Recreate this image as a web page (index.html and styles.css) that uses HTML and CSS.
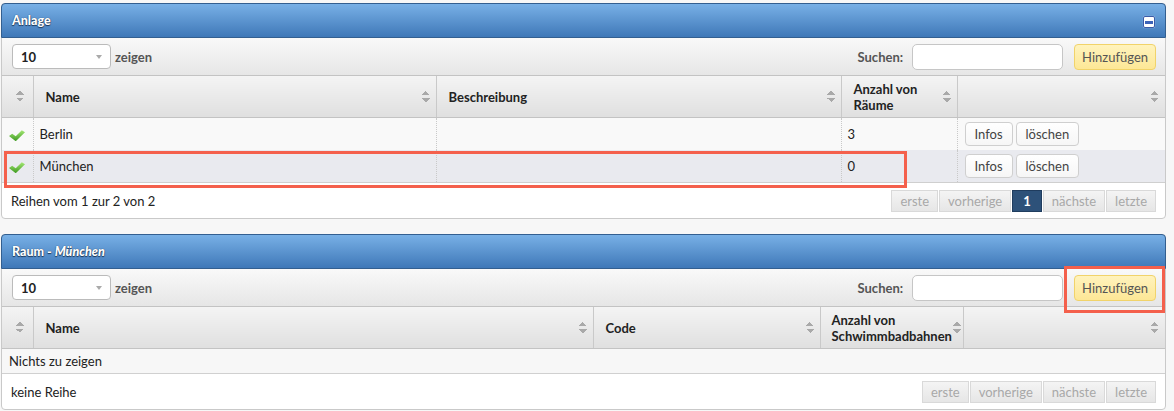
FILE: index.html
```html
<!DOCTYPE html>
<html lang="de">
<head>
  <meta charset="UTF-8">
  <title>Anlage</title>
  <link rel="stylesheet" href="styles.css">
</head>
<body>

<!-- Anlage -->
<div class="panel">
  <div class="panel-head">
    <span class="panel-title">Anlage</span>
    <span class="collapse"><span></span></span>
  </div>
  <div class="toolbar">
    <div class="length">
      <span class="select">10<span class="caret"></span></span>
      <span class="lbl">zeigen</span>
    </div>
    <div class="search">
      <span class="lbl">Suchen:</span>
      <span class="input"></span>
      <button class="add">Hinzufügen</button>
    </div>
  </div>
  <table class="grid">
    <colgroup>
      <col style="width:31px">
      <col style="width:403px">
      <col style="width:405px">
      <col style="width:116px">
      <col>
    </colgroup>
    <thead>
      <tr>
        <th class="first"><span class="sort"></span></th>
        <th><div class="th-in"><span>Name</span><span class="sort"></span></div></th>
        <th><div class="th-in"><span>Beschreibung</span><span class="sort"></span></div></th>
        <th><div class="th-in"><span>Anzahl von<br>Räume</span><span class="sort"></span></div></th>
        <th><div class="th-in"><span></span><span class="sort"></span></div></th>
      </tr>
    </thead>
    <tbody>
      <tr>
        <td class="first"><span class="check"></span></td>
        <td>Berlin</td>
        <td></td>
        <td>3</td>
        <td class="actions"><button class="btn">Infos</button><button class="btn">löschen</button></td>
      </tr>
      <tr class="selected">
        <td class="first"><span class="check"></span></td>
        <td>München</td>
        <td></td>
        <td>0</td>
        <td class="actions"><button class="btn">Infos</button><button class="btn">löschen</button></td>
      </tr>
    </tbody>
  </table>
  <div class="foot">
    <span>Reihen vom 1 zur 2 von 2</span>
    <div class="pager">
      <span>erste</span><span>vorherige</span><span class="current">1</span><span>nächste</span><span>letzte</span>
    </div>
  </div>
  <div class="mark mark-row"></div>
</div>

<!-- Raum -->
<div class="panel">
  <div class="panel-head">
    <span class="panel-title">Raum - <em>München</em></span>
  </div>
  <div class="toolbar">
    <div class="length">
      <span class="select">10<span class="caret"></span></span>
      <span class="lbl">zeigen</span>
    </div>
    <div class="search">
      <span class="lbl">Suchen:</span>
      <span class="input"></span>
      <button class="add">Hinzufügen</button>
    </div>
  </div>
  <table class="grid">
    <colgroup>
      <col style="width:31px">
      <col style="width:560px">
      <col style="width:227px">
      <col style="width:143px">
      <col>
    </colgroup>
    <thead>
      <tr>
        <th class="first"><span class="sort"></span></th>
        <th><div class="th-in"><span>Name</span><span class="sort"></span></div></th>
        <th><div class="th-in"><span>Code</span><span class="sort"></span></div></th>
        <th class="tight"><div class="th-in"><span>Anzahl von<br>Schwimmbadbahnen</span><span class="sort"></span></div></th>
        <th><div class="th-in"><span></span><span class="sort"></span></div></th>
      </tr>
    </thead>
    <tbody>
      <tr class="empty">
        <td colspan="5">Nichts zu zeigen</td>
      </tr>
    </tbody>
  </table>
  <div class="foot">
    <span>keine Reihe</span>
    <div class="pager">
      <span>erste</span><span>vorherige</span><span>nächste</span><span>letzte</span>
    </div>
  </div>
  <div class="mark mark-add"></div>
</div>

</body>
</html>
```

FILE: styles.css
```css
body {
  margin: 0;
  padding: 3px 8px 0 1px;
  font-family: Lato, "Open Sans", sans-serif;
  font-size: 13px;
  color: #222;
  background: #f7f7f7;
}
.panel {
  position: relative;
  background: #fff;
  border: 1px solid #c9c9c9;
  border-radius: 4px;
  margin-bottom: 15px;
}
.panel-head {
  display: flex;
  justify-content: space-between;
  align-items: center;
  height: 33px;
  margin: -1px -1px 0;
  padding: 0 10px;
  background: linear-gradient(#78b0e6, #3f78b8);
  border: 1px solid #335f90;
  border-radius: 4px 4px 0 0;
}
.panel-title {
  color: #fff;
  font-weight: 900;
  font-size: 12.5px;
  text-shadow: 0 1px 1px #1a3556, 0 0 1px #1a3556;
}
.panel-title em {
  font-style: italic;
}
.collapse {
  display: flex;
  align-items: center;
  justify-content: center;
  width: 10px;
  height: 10px;
  margin-top: 3px;
  background: #fff;
  border: 1px solid #3b5ca8;
  border-radius: 2px;
  box-shadow: 0 0 1px #c8d8f0;
}
.collapse span {
  width: 8px;
  height: 3px;
  background: #3d63b8;
}
.toolbar {
  display: flex;
  justify-content: space-between;
  align-items: center;
  height: 37px;
  padding: 0 9px 0 10px;
  background: linear-gradient(#f9f9f9, #e6e6e6);
  border-bottom: 1px solid #c3c3c3;
}
.length, .search {
  display: flex;
  align-items: center;
}
.lbl {
  font-weight: bold;
  color: #555;
}
.select {
  position: relative;
  display: flex;
  align-items: center;
  box-sizing: border-box;
  width: 99px;
  height: 25px;
  margin-right: 4px;
  padding-left: 8px;
  font-weight: bold;
  background: #fff;
  border: 1px solid #bbb;
  border-radius: 4px;
}
.caret {
  position: absolute;
  right: 8px;
  top: 10px;
  border-left: 3px solid transparent;
  border-right: 3px solid transparent;
  border-top: 4px solid #aaa;
}
.search .lbl {
  margin-right: 9px;
}
.input {
  box-sizing: border-box;
  width: 151px;
  height: 26px;
  background: #fff;
  border: 1px solid #c6c6c6;
  border-radius: 5px;
}
.add {
  margin-left: 11px;
  height: 26px;
  padding: 0 7px;
  font-family: inherit;
  font-size: 13px;
  color: #555;
  background: linear-gradient(#fff3bd, #fde796);
  border: 1px solid #f1d36a;
  border-radius: 4px;
}
.grid {
  width: 100%;
  border-collapse: collapse;
  table-layout: fixed;
}
.grid th {
  height: 41px;
  padding: 0 6px 0 12px;
  text-align: left;
  font-weight: bold;
  line-height: 16px;
  background: linear-gradient(#f4f4f4, #dfdfdf);
  border-right: 1px solid #c9c9c9;
  border-bottom: 1px solid #c3c3c3;
}
.grid th:last-child {
  border-right: none;
}
.grid th.first {
  padding: 0;
  text-align: center;
}
.grid th.tight {
  padding-left: 11px;
  padding-right: 2px;
}
.th-in {
  display: flex;
  justify-content: space-between;
  align-items: center;
}
.sort {
  display: inline-block;
  width: 8px;
  height: 11px;
  background:
    linear-gradient(to bottom right, transparent 50%, #a9a9a9 50%) 0 0 / 4px 4px no-repeat,
    linear-gradient(to bottom left, transparent 50%, #a9a9a9 50%) 4px 0 / 4px 4px no-repeat,
    linear-gradient(to top right, transparent 50%, #a9a9a9 50%) 0 7px / 4px 4px no-repeat,
    linear-gradient(to top left, transparent 50%, #a9a9a9 50%) 4px 7px / 4px 4px no-repeat;
}
.grid th.first .sort {
  margin-left: 6px;
}
.grid td {
  height: 32px;
  padding: 0 6px;
  background: #f9f9f9;
  border-right: 1px dotted #c9c9c9;
}
.grid td:last-child {
  border-right: none;
}
.grid td.first {
  padding: 0 0 0 7px;
}
.grid tr.selected td {
  height: 32px;
  background: #e9eaef;
  border-bottom: 1px solid #cfcfcf;
}
.grid tr.empty td {
  height: 24px;
  padding: 0 7px;
  background: #f7f7f7;
  border-bottom: 1px solid #d0d0d0;
}
.check {
  display: inline-block;
  width: 16px;
  height: 11px;
  background: linear-gradient(#a8ea78, #3f9b22);
  clip-path: polygon(0 52%, 20% 32%, 42% 56%, 80% 0, 100% 18%, 42% 100%);
  vertical-align: middle;
}
.actions {
  padding-left: 7px !important;
}
.btn {
  height: 24px;
  margin-right: 3px;
  padding: 0 9px;
  font-family: inherit;
  font-size: 13px;
  color: #444;
  background: linear-gradient(#fff, #f6f6f6);
  border: 1px solid #cfcfcf;
  border-radius: 4px;
}
.foot {
  display: flex;
  justify-content: space-between;
  align-items: center;
  height: 35px;
  padding: 0 9px 0 9px;
}
.pager {
  display: flex;
  gap: 1px;
}
.pager span {
  height: 20px;
  line-height: 20px;
  padding: 0 8px;
  color: #a8a8a8;
  background: linear-gradient(#f4f4f4, #e6e6e6);
  border: 1px solid #d9d9d9;
}
.pager span.current {
  padding: 0 10px;
  color: #fff;
  font-weight: bold;
  background: #2d5179;
  border-color: #1f3c5e;
}
.mark {
  position: absolute;
  border: 3px solid #f4604c;
}
.mark-row {
  left: 2px;
  top: 147px;
  width: 897px;
  height: 31px;
}
.mark-add {
  right: 0;
  top: 31px;
  width: 95px;
  height: 41px;
}
```
